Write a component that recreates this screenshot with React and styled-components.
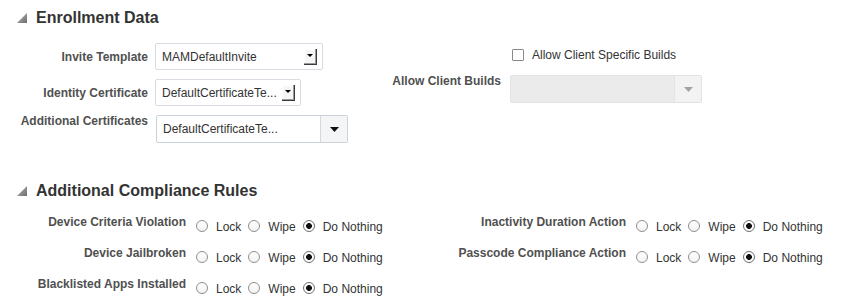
import React from 'react'
import styled, { createGlobalStyle } from 'styled-components'

const GlobalStyle = createGlobalStyle`
	body {
		margin: 0;
		background: #fff;
		font-family: "Liberation Sans", Arial, sans-serif;
	}
`

const Page = styled.div`
	width: 865px;
	height: 303px;
	overflow: hidden;
	box-sizing: border-box;
	padding-top: 8px;
`

const SectionHeader = styled.div`
	display: flex;
	align-items: flex-start;
	gap: 9px;
	height: 20px;
	padding-left: 17px;
	margin-top: ${p => p.$top || 0}px;
	font-size: 16px;
	line-height: 20px;
	font-weight: bold;
	color: #333;
`

const Disclosure = styled.svg`
	width: 10px;
	height: 10px;
	margin-top: 5px;
	flex: none;
`

const EnrollBody = styled.div`
	display: flex;
	margin-top: 15px;
`

const FormGrid = styled.div`
	display: grid;
	grid-template-columns: ${p => p.$label}px auto;
	column-gap: ${p => p.$gap}px;
	row-gap: ${p => p.$rowGap}px;
	align-content: start;
	width: ${p => p.$width ? `${p.$width}px` : 'auto'};
	flex: none;
`

const Label = styled.div`
	font-size: 12px;
	line-height: 14px;
	font-weight: bold;
	color: #505050;
	text-align: right;
	white-space: nowrap;
	align-self: ${p => p.$top ? 'start' : 'center'};
	margin-top: ${p => p.$top ? '-1px' : '0'};
`

const ChoiceBox = styled.div`
	display: flex;
	align-items: center;
	box-sizing: border-box;
	width: ${p => p.$w}px;
	height: 27px;
	padding: 0 5px 0 6px;
	border: 1px solid #d6dce2;
	border-radius: 2px;
	background: #fff;
	font-size: 12px;
	color: #333;
`

const ChoiceText = styled.span`
	flex: 1;
	white-space: nowrap;
	overflow: hidden;
`

const ClassicButton = styled.span`
	display: flex;
	align-items: center;
	justify-content: center;
	box-sizing: border-box;
	width: 13px;
	height: 16px;
	flex: none;
	background: #f6f6f6;
	border-right: 1px solid #3c3c3c;
	border-bottom: 1px solid #3c3c3c;
	box-shadow: inset -1px -1px 0 #9a9a9a, inset 1px 1px 0 #fff;
	padding-bottom: 2px;

	&::after {
		content: '';
		width: 0;
		height: 0;
		border-left: 3px solid transparent;
		border-right: 3px solid transparent;
		border-top: 3px solid #000;
	}
`

const SelectBox = styled.div`
	display: flex;
	box-sizing: border-box;
	width: 192px;
	height: 28px;
	margin-left: ${p => p.$disabled ? 0 : 1}px;
	border: 1px solid ${p => p.$disabled ? '#e2e2e2' : '#cbd2d9'};
	border-radius: 2px;
	background: ${p => p.$disabled ? '#ebebeb' : '#fff'};
	overflow: hidden;
	font-size: 12px;
	color: #333;
`

const SelectValue = styled.div`
	flex: 1;
	display: flex;
	align-items: center;
	padding-left: 6px;
	white-space: nowrap;
`

const SelectArrow = styled.div`
	display: flex;
	align-items: center;
	justify-content: center;
	box-sizing: border-box;
	width: 27px;
	flex: none;
	border-left: 1px solid ${p => p.$disabled ? '#e4e4e4' : '#d5d9dd'};
	background: ${p => p.$disabled ? '#f3f3f3' : '#f4f5f6'};
`

const CheckRow = styled.label`
	grid-column: 2;
	display: flex;
	align-items: center;
	gap: 8px;
	height: 24px;
	padding-left: 2px;
	font-size: 12px;
	color: #333;
`

const CheckSquare = styled.span`
	box-sizing: border-box;
	width: 12px;
	height: 12px;
	border: 1px solid #8a8a8a;
	border-radius: 1px;
	background: #fff;
	margin-bottom: 1px;
`

const ComplianceBody = styled.div`
	display: flex;
	margin-top: 15px;
`

const RadioGroup = styled.div`
	display: flex;
	align-items: center;
	height: 14px;
	padding-top: 4px;
	font-size: 12px;
	line-height: 14px;
	color: #333;
	white-space: nowrap;
`

const Option = styled.span`
	display: inline-flex;
	align-items: center;
	margin-right: 7px;
`

const RadioCircle = styled.span`
	box-sizing: border-box;
	width: 12px;
	height: 12px;
	margin-right: 8px;
	margin-bottom: 2px;
	border: 1px solid ${p => p.$on ? '#6e6e6e' : '#8e8e8e'};
	border-radius: 50%;
	background: ${p => p.$on
		? 'radial-gradient(circle, #111 0, #111 2.6px, #fff 3.2px)'
		: 'linear-gradient(#fff, #f3f3f3)'};
`

const Arrow = ({ color }) => (
	<svg width="9" height="5" viewBox="0 0 9 5">
		<polygon points="0,0 9,0 4.5,5" fill={color} />
	</svg>
)

const Triangle = () => (
	<Disclosure viewBox="0 0 10 10">
		<defs>
			<linearGradient id="tri" x1="0" y1="0" x2="1" y2="1">
				<stop offset="0" stopColor="#b5b5b5" />
				<stop offset="1" stopColor="#6f6f6f" />
			</linearGradient>
		</defs>
		<polygon points="10,0 10,10 0,10" fill="url(#tri)" />
	</Disclosure>
)

const options = ['Lock', 'Wipe', 'Do Nothing']

const Radios = ({ selected }) => (
	<RadioGroup>
		{options.map(o => (
			<Option key={o}>
				<RadioCircle $on={o === selected} />
				{o}
			</Option>
		))}
	</RadioGroup>
)

const leftRules = ['Device Criteria Violation', 'Device Jailbroken', 'Blacklisted Apps Installed']
const rightRules = ['Inactivity Duration Action', 'Passcode Compliance Action']

const App = () => {
	return (
		<Page>
			<GlobalStyle />
			<SectionHeader>
				<Triangle />
				Enrollment Data
			</SectionHeader>
			<EnrollBody>
				<FormGrid $label={148} $gap={7} $rowGap={9} $width={380}>
					<Label>Invite Template</Label>
					<ChoiceBox $w={168}>
						<ChoiceText>MAMDefaultInvite</ChoiceText>
						<ClassicButton />
					</ChoiceBox>
					<Label>Identity Certificate</Label>
					<ChoiceBox $w={146}>
						<ChoiceText>DefaultCertificateTe...</ChoiceText>
						<ClassicButton />
					</ChoiceBox>
					<Label $top>Additional Certificates</Label>
					<SelectBox>
						<SelectValue>DefaultCertificateTe...</SelectValue>
						<SelectArrow>
							<Arrow color="#111" />
						</SelectArrow>
					</SelectBox>
				</FormGrid>
				<FormGrid $label={121} $gap={9} $rowGap={8}>
					<CheckRow>
						<CheckSquare />
						Allow Client Specific Builds
					</CheckRow>
					<Label $top>Allow Client Builds</Label>
					<SelectBox $disabled>
						<SelectValue />
						<SelectArrow $disabled>
							<Arrow color="#a3a3a3" />
						</SelectArrow>
					</SelectBox>
				</FormGrid>
			</EnrollBody>

			<SectionHeader $top={38}>
				<Triangle />
				Additional Compliance Rules
			</SectionHeader>
			<ComplianceBody>
				<FormGrid $label={186} $gap={10} $rowGap={13} $width={440}>
					{leftRules.map(r => (
						<React.Fragment key={r}>
							<Label $top>{r}</Label>
							<Radios selected="Do Nothing" />
						</React.Fragment>
					))}
				</FormGrid>
				<FormGrid $label={186} $gap={10} $rowGap={13}>
					{rightRules.map(r => (
						<React.Fragment key={r}>
							<Label $top>{r}</Label>
							<Radios selected="Do Nothing" />
						</React.Fragment>
					))}
				</FormGrid>
			</ComplianceBody>
		</Page>
	)
}

export default App
